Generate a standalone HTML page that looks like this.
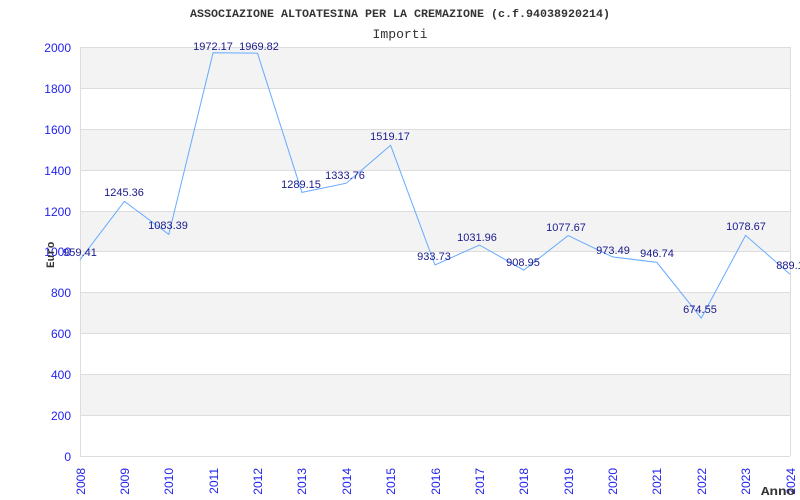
<!DOCTYPE html>
<html><head><meta charset="utf-8"><style>
html,body{margin:0;padding:0;background:#fff;width:800px;height:500px;overflow:hidden}
svg{display:block}
</style></head><body>
<svg width="800" height="500" xmlns="http://www.w3.org/2000/svg">
<g fill="#f3f3f3">
<rect x="80" y="47" width="710" height="41"/>
<rect x="80" y="129" width="710" height="41"/>
<rect x="80" y="211" width="710" height="41"/>
<rect x="80" y="292" width="710" height="41"/>
<rect x="80" y="374" width="710" height="41"/>
</g>
<g stroke="#dddddd" stroke-width="1">
<line x1="80" y1="47.5" x2="790" y2="47.5"/>
<line x1="80" y1="88.5" x2="790" y2="88.5"/>
<line x1="80" y1="129.5" x2="790" y2="129.5"/>
<line x1="80" y1="170.5" x2="790" y2="170.5"/>
<line x1="80" y1="211.5" x2="790" y2="211.5"/>
<line x1="80" y1="251.5" x2="790" y2="251.5"/>
<line x1="80" y1="292.5" x2="790" y2="292.5"/>
<line x1="80" y1="333.5" x2="790" y2="333.5"/>
<line x1="80" y1="374.5" x2="790" y2="374.5"/>
<line x1="80" y1="415.5" x2="790" y2="415.5"/>
<line x1="80" y1="456.5" x2="790" y2="456.5"/>
<line x1="80.5" y1="47" x2="80.5" y2="456"/>
<line x1="790.5" y1="47" x2="790.5" y2="456"/>
</g>
<polyline fill="none" stroke="#66aaff" stroke-width="1" points="80,259.8 124.4,201.3 168.8,234.4 213.1,52.7 257.5,53.2 301.9,192.4 346.3,183.2 390.6,145.3 435,265.0 479.4,245.0 523.8,270.1 568.1,235.6 612.5,256.9 656.9,262.4 701.3,318.1 745.6,235.4 790,274.2"/>
<g font-family="Liberation Sans, sans-serif" font-size="11" fill="#1a1a8c" text-anchor="middle">
<text x="80" y="256">959.41</text>
<text x="124" y="196">1245.36</text>
<text x="168" y="229">1083.39</text>
<text x="213" y="50">1972.17</text>
<text x="259" y="50">1969.82</text>
<text x="301" y="188">1289.15</text>
<text x="345" y="179">1333.76</text>
<text x="390" y="140">1519.17</text>
<text x="434" y="260">933.73</text>
<text x="477" y="241">1031.96</text>
<text x="523" y="266">908.95</text>
<text x="566" y="231">1077.67</text>
<text x="613" y="254">973.49</text>
<text x="657" y="257">946.74</text>
<text x="700" y="313">674.55</text>
<text x="746" y="230">1078.67</text>
<text x="790" y="269">889.1</text>
</g>
<g font-family="Liberation Sans, sans-serif" font-size="12" fill="#2222ee" text-anchor="end">
<text x="71" y="52">2000</text>
<text x="71" y="93">1800</text>
<text x="71" y="134">1600</text>
<text x="71" y="175">1400</text>
<text x="71" y="216">1200</text>
<text x="71" y="256">1000</text>
<text x="71" y="297">800</text>
<text x="71" y="338">600</text>
<text x="71" y="379">400</text>
<text x="71" y="420">200</text>
<text x="71" y="461">0</text>
</g>
<g font-family="Liberation Sans, sans-serif" font-size="12" fill="#2222ee" text-anchor="end">
<text transform="translate(85,468) rotate(-90)">2008</text>
<text transform="translate(129,468) rotate(-90)">2009</text>
<text transform="translate(173,468) rotate(-90)">2010</text>
<text transform="translate(218,468) rotate(-90)">2011</text>
<text transform="translate(262,468) rotate(-90)">2012</text>
<text transform="translate(306,468) rotate(-90)">2013</text>
<text transform="translate(351,468) rotate(-90)">2014</text>
<text transform="translate(395,468) rotate(-90)">2015</text>
<text transform="translate(440,468) rotate(-90)">2016</text>
<text transform="translate(484,468) rotate(-90)">2017</text>
<text transform="translate(528,468) rotate(-90)">2018</text>
<text transform="translate(573,468) rotate(-90)">2019</text>
<text transform="translate(617,468) rotate(-90)">2020</text>
<text transform="translate(661,468) rotate(-90)">2021</text>
<text transform="translate(706,468) rotate(-90)">2022</text>
<text transform="translate(750,468) rotate(-90)">2023</text>
<text transform="translate(795,468) rotate(-90)">2024</text>
</g>
<text x="400" y="17" text-anchor="middle" font-family="Liberation Mono, monospace" font-size="11" font-weight="bold" fill="#333" textLength="420" lengthAdjust="spacingAndGlyphs">ASSOCIAZIONE ALTOATESINA PER LA CREMAZIONE (c.f.94038920214)</text>
<text x="400" y="38" text-anchor="middle" font-family="Liberation Mono, monospace" font-size="13" fill="#333" textLength="55" lengthAdjust="spacingAndGlyphs">Importi</text>
<text transform="translate(54,268) rotate(-90)" font-family="Liberation Mono, monospace" font-size="11" font-weight="bold" fill="#333">Euro</text>
<text x="761" y="495" font-family="Liberation Mono, monospace" font-size="12" font-weight="bold" fill="#333" textLength="34" lengthAdjust="spacingAndGlyphs">Anno</text>
</svg>
</body></html>
